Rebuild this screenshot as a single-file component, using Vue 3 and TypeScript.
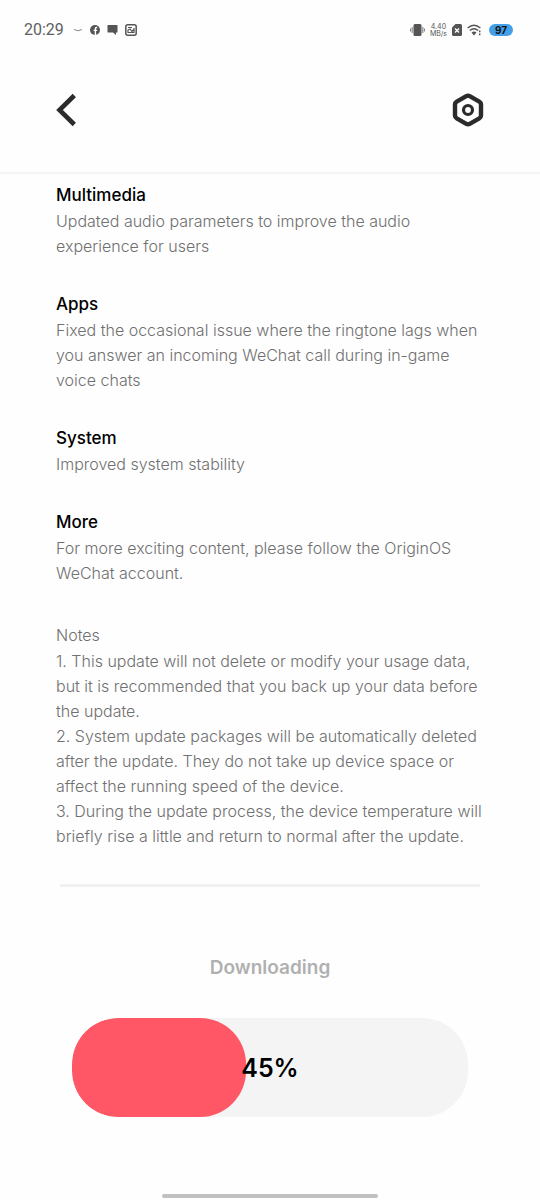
<script setup lang="ts">
import { ref } from 'vue'

interface Section {
  title: string
  body: string
}

const sections: Section[] = [
  { title: 'Multimedia', body: 'Updated audio parameters to improve the audio experience for users' },
  {
    title: 'Apps',
    body: 'Fixed the occasional issue where the ringtone lags when you answer an incoming WeChat call during in-game voice chats',
  },
  { title: 'System', body: 'Improved system stability' },
  { title: 'More', body: 'For more exciting content, please follow the OriginOS WeChat account.' },
]

const notes: string[] = [
  '1. This update will not delete or modify your usage data, but it is recommended that you back up your data before the update.',
  '2. System update packages will be automatically deleted after the update. They do not take up device space or affect the running speed of the device.',
  '3. During the update process, the device temperature will briefly rise a little and return to normal after the update.',
]

const progress = ref(45)
</script>

<template>
  <div class="screen">
    <div class="status">
      <div class="status-left">
        <span class="clock">20:29</span>
        <svg class="arc" width="10" height="12" viewBox="0 0 10 12" fill="none" stroke="#8a8a8a" stroke-width="1">
          <path d="M1 5.5Q5 8 9 5.5" />
        </svg>
        <svg width="10" height="10" viewBox="0 0 10 10">
          <circle cx="5" cy="5" r="5" fill="#555" />
          <path d="M7.200 2.500H6.400Q5.400 2.500 5.400 3.600V10M3.600 5.400H7.200" fill="none" stroke="#fff" stroke-width="1.400" />
        </svg>
        <svg width="11" height="10" viewBox="0 0 11 10">
          <path d="M1 0H10Q10.500 0 10.500 .5V7Q10.500 7.500 10 7.500H9V10L6 7.500H1Q.5 7.500 .5 7V.5Q.5 0 1 0Z" fill="#555" />
        </svg>
        <svg width="12" height="12" viewBox="0 0 12 12" fill="none" stroke="#555">
          <rect x=".8" y=".8" width="10.400" height="10.400" rx="2" stroke-width="1.500" />
          <path d="M3 3.500H7M9 4V8.500H3V6L5 5L7 7.500L8.500 5.500" stroke-width="1.200" />
        </svg>
      </div>
      <div class="status-right">
        <svg width="15" height="14" viewBox="0 0 15 14" fill="none" stroke="#777">
          <rect x="3.500" y="1" width="8" height="12" rx="1.500" fill="#555" stroke="none" />
          <path d="M2.200 4V10M.6 5.500V8.500M12.800 4V10M14.400 5.500V8.500" stroke-width="1" />
        </svg>
        <span class="speed"><span>4.40</span><span>MB/s</span></span>
        <svg width="10" height="12" viewBox="0 0 10 12">
          <path d="M3.500 0H8.500Q10 0 10 1.500V10.500Q10 12 8.500 12H1.500Q0 12 0 10.500V3.500Z" fill="#555" />
          <path d="M3 4.500L7 8.500M7 4.500L3 8.500" stroke="#fff" stroke-width="1.400" />
        </svg>
        <svg width="15" height="12" viewBox="0 0 15 12" fill="none" stroke="#555" stroke-width="1.500">
          <path d="M.6 4Q7 -1.500 13.400 4M2.800 6.500Q7 3 11.200 6.500" />
          <path d="M4.500 8.500Q7 6.500 9.500 8.500L7 11.500Z" fill="#555" stroke="none" />
          <path d="M12.700 6.500V8.300M12.700 9.500V11.300" />
        </svg>
        <span class="battery">97</span>
      </div>
    </div>

    <header class="bar">
      <button class="icon-button" type="button" aria-label="Back">
        <svg width="20" height="34" viewBox="0 0 20 34" fill="none" stroke="#2b2b2d" stroke-width="4.600">
          <path d="M18.300 2.500L3.500 17L18.300 31.500" />
        </svg>
      </button>
      <button class="icon-button" type="button" aria-label="Settings">
        <svg width="32" height="34" viewBox="0 0 32 34" fill="none" stroke="#2b2b2d" stroke-width="4.400" stroke-linejoin="round">
          <path d="M14.300 3.200Q16 2.200 17.700 3.200L27.300 8.600Q29 9.600 29 11.500V22.500Q29 24.400 27.300 25.400L17.700 30.800Q16 31.800 14.300 30.800L4.700 25.400Q3 24.400 3 22.500V11.500Q3 9.600 4.700 8.600Z" />
          <circle cx="16" cy="17" r="4.500" stroke-width="3.200" />
        </svg>
      </button>
    </header>

    <main class="content">
      <section v-for="s in sections" :key="s.title" class="section">
        <h2>{{ s.title }}</h2>
        <p>{{ s.body }}</p>
      </section>
      <section class="notes">
        <h3>Notes</h3>
        <p v-for="n in notes" :key="n">{{ n }}</p>
      </section>
      <hr />
    </main>

    <footer class="download">
      <p id="download-state" class="state">Downloading</p>
      <div
        class="track"
        role="progressbar"
        aria-labelledby="download-state"
        aria-valuemin="0"
        aria-valuemax="100"
        :aria-valuenow="progress"
      >
        <div class="fill" :style="{ width: progress - 1 + '%' }"></div>
        <span class="percent">{{ progress }}%</span>
      </div>
      <div class="home"></div>
    </footer>
  </div>
</template>

<style>
body {
  margin: 0;
  background: #fefefe;
}
</style>

<style scoped>
.screen {
  display: flex;
  flex-direction: column;
  min-height: 100vh;
  box-sizing: border-box;
  font-family: Inter, "Liberation Sans", sans-serif;
  color: #707070;
}
.status {
  display: flex;
  justify-content: space-between;
  align-items: center;
  height: 60px;
  padding: 0 27px 0 24px;
}
.status-left {
  display: flex;
  align-items: center;
  gap: 7px;
}
.clock {
  font: 16px/20px Roboto, sans-serif;
  color: #606060;
}
.arc {
  margin-left: 2px;
}
.status-right {
  display: flex;
  align-items: center;
  gap: 5px;
}
.speed {
  display: flex;
  flex-direction: column;
  align-items: center;
  font-size: 7px;
  line-height: 7px;
  color: #555;
}
.battery {
  width: 24px;
  margin-left: 2px;
  border-radius: 6px;
  background: #43a0e8;
  color: #111;
  font-size: 10px;
  font-weight: 700;
  line-height: 12px;
  text-align: center;
}
.bar {
  display: flex;
  justify-content: space-between;
  align-items: center;
  height: 114px;
  padding: 0 56px 12px;
  border-bottom: 2px solid #f5f5f5;
  box-sizing: border-box;
}
.icon-button {
  display: flex;
  padding: 0;
  border: 0;
  background: none;
}
.content {
  padding: 8px 56px 0;
}
.section {
  margin-bottom: 32px;
}
h2,
h3,
p {
  margin: 0;
}
h2 {
  font-size: 17px;
  font-weight: 500;
  line-height: 27px;
  color: #000;
}
h3,
.content p {
  font-size: 16px;
  font-weight: 300;
  line-height: 25px;
}
h3 {
  line-height: 27px;
}
.notes {
  padding-top: 4px;
}
hr {
  height: 3px;
  margin: 35px 4px 0;
  border: 0;
  background: #f1f1f1;
}
.download {
  display: flex;
  flex: 1;
  flex-direction: column;
  align-items: center;
  padding: 69px 72px 2px;
}
.state {
  margin-bottom: 38px;
  font-size: 19px;
  font-weight: 600;
  line-height: 24px;
  color: #b0b0b0;
}
.track {
  display: grid;
  align-items: center;
  width: 100%;
  height: 99px;
  border-radius: 46px;
  background: #f4f4f4;
  overflow: hidden;
}
.fill,
.percent {
  grid-area: 1 / 1;
}
.fill {
  height: 100%;
  border-radius: 46px;
  background: #ff5765;
}
.percent {
  justify-self: center;
  font-size: 25px;
  font-weight: 600;
  line-height: 32px;
  color: #000;
}
.home {
  width: 216px;
  height: 4px;
  margin-top: auto;
  border-radius: 2px;
  background: #c0c0c0;
}
</style>
